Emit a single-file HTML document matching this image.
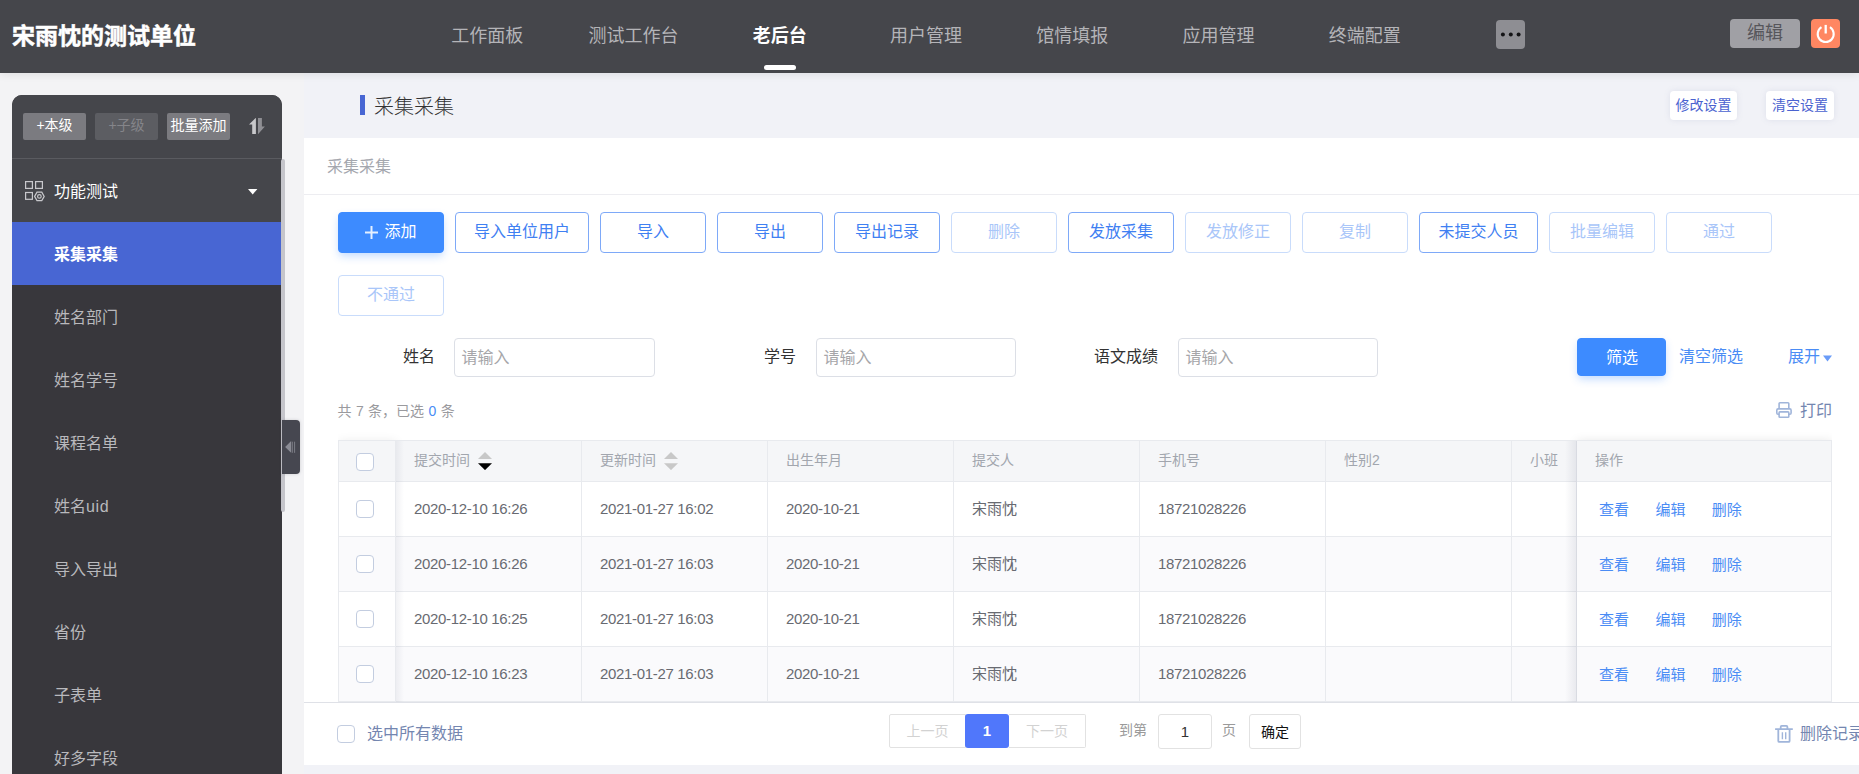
<!DOCTYPE html>
<html lang="zh-CN">
<head>
<meta charset="utf-8">
<title>采集采集</title>
<style>
*{box-sizing:border-box;margin:0;padding:0}
html,body{width:1859px;height:774px;overflow:hidden}
body{background:#f3f3f5;font-family:"Liberation Sans","Noto Sans CJK SC",sans-serif;font-size:14px;color:#333;position:relative}
.abs{position:absolute}
/* header */
#hd{z-index:5;position:absolute;left:0;top:0;width:1859px;height:73px;background:#45464b;box-shadow:0 2px 8px rgba(0,0,0,.08)}
#logo{position:absolute;left:12px;top:0;height:72px;line-height:72px;font-size:23px;font-weight:700;color:#fff;white-space:nowrap;-webkit-text-stroke:.5px #fff}
#nav{position:absolute;left:414px;top:0;width:1024px;height:73px;display:flex}
#nav div{flex:1;text-align:center;line-height:72px;font-size:18px;color:#b4b4b8;position:relative;white-space:nowrap}
#nav div.on{color:#fff;font-weight:700}
#nav div.on:after{content:"";position:absolute;left:50%;margin-left:-16px;top:65px;width:32px;height:5px;border-radius:2.5px;background:#fff}
#more{position:absolute;left:1496px;top:20px;width:29px;height:29px;border-radius:4px;background:#8e8e93}
#more i{position:absolute;top:12.5px;width:4px;height:4px;border-radius:50%;background:#111}
#edit{position:absolute;left:1730px;top:19px;width:70px;height:29px;border-radius:4px;background:#a0a0a5;color:#56565b;font-size:18px;line-height:29px;text-align:center}
#pwr{position:absolute;left:1811px;top:19px;width:29px;height:29px;border-radius:4px;background:#ff8762}
/* sidebar */
#sb{position:absolute;left:12px;top:95px;width:270px;height:700px;background:#38373c;border-radius:10px 10px 0 0;overflow:hidden}
#sbtop{position:absolute;left:0;top:0;width:270px;height:127px;background:#45464b}
#sbtop .ln{position:absolute;left:0;top:63px;width:270px;height:1px;background:#5a5b60}
.sbtn{position:absolute;top:18px;width:63px;height:27px;border-radius:2px;font-size:14px;line-height:25.5px;text-align:center;color:#fff;background:#7b7b80;white-space:nowrap}
.sbtn.dis{background:#5c5d62;color:#85858a}
#grp{position:absolute;left:42px;top:87px;font-size:16px;line-height:20px;color:#fff}
.mi{position:absolute;left:0;width:270px;height:63px;line-height:66px;padding-left:42px;font-size:16px;color:#b9b9bd;white-space:nowrap}
.mi.on{background:#4866d3;color:#fff;font-weight:700}
#thumb{position:absolute;left:281px;top:159px;width:4px;height:353px;background:#c5c5cb;border-radius:2px}
#hand{position:absolute;left:282px;top:420px;width:18px;height:54px;background:#464750;border-radius:0 4px 4px 0;box-shadow:0 0 3px rgba(80,80,100,.25)}
/* main */
#ptitle{position:absolute;left:360px;top:95px;height:20px;border-left:5px solid #4866d3;padding-left:9px;font-size:20px;line-height:24px;color:#333;font-weight:300;white-space:nowrap}
.wbtn{position:absolute;top:91px;height:29px;border-radius:4px;background:#fff;color:#4a62d0;font-size:14px;line-height:29px;text-align:center;box-shadow:0 0 6px rgba(120,130,170,.15)}
#card{position:absolute;left:304px;top:138px;width:1600px;height:627px;background:#fff}
#ctitle{position:absolute;left:23px;top:0;height:56px;line-height:58px;font-size:16px;color:#a4a7ae}
#cline{position:absolute;left:0;top:56px;width:1600px;height:1px;background:#ededf1}
.btn{position:absolute;height:41px;border:1px solid #7ea9f8;border-radius:4px;background:#fff;color:#3f80f2;font-size:16px;line-height:38.5px;text-align:center;white-space:nowrap}
.btn.dis{border-color:#c9dcfb;color:#a9c6f9}
.btn.pri{background:#3d8bff;border-color:#3d8bff;color:#fff;box-shadow:0 4px 8px -1px rgba(61,139,255,.32)}
.lab{position:absolute;top:200px;height:38px;line-height:38px;font-size:16px;color:#333;text-align:right;white-space:nowrap}
.inp{position:absolute;top:200px;width:201px;height:39px;border:1px solid #dcdfe6;border-radius:4px;padding-left:6.5px;line-height:38px;font-size:16px;color:#a6a6a9}
.lnk{position:absolute;top:200px;height:38px;line-height:38px;font-size:16px;color:#4a8cf5;white-space:nowrap}
/* table */
#tb{background:#fff;position:absolute;left:34px;top:302px;width:1494px;height:262px;border-left:1px solid #e8eaee;border-top:1px solid #e8eaee;overflow:hidden}
.row{position:absolute;left:0;width:1493px;border-bottom:1px solid #e8eaee}
.row.h{top:0;height:41px;background:#f5f6f8;color:#a2a6ae}
.row.b{height:55px;color:#686a71;background:#fff}
.row.b.s{background:#fafafc}
.c{position:absolute;top:0;height:100%;border-right:1px solid #e8eaee;padding-left:18px;white-space:nowrap;font-size:14px}
.row.h .c{line-height:39.5px}
.row.b .c{line-height:54px;font-size:15px}
.row.b .n{letter-spacing:-.33px}
.ck{position:absolute;width:18px;height:18px;border:1px solid #c3cde0;border-radius:4px;background:#fff}
.op a{color:#4a8cf5;font-size:15px;position:relative;top:.5px;margin-right:26.4px;text-decoration:none}
/* footer */
#ft{position:absolute;left:0;top:564px;width:1600px;height:63px;background:#fff;border-top:1px solid #dfe1e7}
</style>
</head>
<body>
<div id="hd">
  <div id="logo">宋雨忱的测试单位</div>
  <div id="nav"><div>工作面板</div><div>测试工作台</div><div class="on">老后台</div><div>用户管理</div><div>馆情填报</div><div>应用管理</div><div>终端配置</div></div>
  <div id="more"><svg width="29" height="29" viewBox="0 0 29 29"><circle cx="6.900" cy="14.600" r="2" fill="#141416"/><circle cx="14.800" cy="14.600" r="2" fill="#141416"/><circle cx="22.600" cy="14.600" r="2" fill="#141416"/></svg></div>
  <div id="edit">编辑</div>
  <div id="pwr"><svg width="29" height="29" viewBox="0 0 29 29"><path d="M10.460 8.220A8 8 0 1 0 18.940 8.220" fill="none" stroke="#fff" stroke-width="2.100"/><path d="M14.700 5.900V14.500" stroke="#fff" stroke-width="2.300"/></svg></div>
</div>

<div id="sb">
  <div id="sbtop">
    <div class="sbtn" style="left:11px">+本级</div>
    <div class="sbtn dis" style="left:83px">+子级</div>
    <div class="sbtn" style="left:155px">批量添加</div>
    <svg class="abs" style="left:236px;top:22px" width="18" height="18" viewBox="0 0 18 18"><path d="M7.9 .8L1 7.600h3.200V17h3.700z" fill="#c8c8cb"/><path d="M10 1h3.900v8.600h3L10 17.200z" fill="#8f8f94"/></svg>
    <div class="ln"></div>
    <svg class="abs" style="left:12px;top:85px" width="22" height="22" viewBox="0 0 22 22"><g fill="none" stroke="#c8c8cc" stroke-width="1.200"><rect x="1.600" y="1.600" width="6.800" height="6.800"/><rect x="11.600" y="1.600" width="6.800" height="6.800"/><rect x="1.600" y="12.500" width="6.800" height="6.800"/><path d="M10.600 16.400l2.400-4.200h4.800l2.400 4.200-2.400 4.200h-4.800z"/><circle cx="15.400" cy="16.400" r="1.800"/></g></svg>
    <div id="grp">功能测试</div>
    <svg class="abs" style="left:236px;top:94px" width="10" height="6" viewBox="0 0 10 6"><path d="M0 0h9.4L4.7 5.4z" fill="#fff"/></svg>
  </div>
  <div class="mi on" style="top:127px">采集采集</div>
  <div class="mi" style="top:190px">姓名部门</div>
  <div class="mi" style="top:253px">姓名学号</div>
  <div class="mi" style="top:316px">课程名单</div>
  <div class="mi" style="top:379px">姓名<span style="letter-spacing:.7px">uid</span></div>
  <div class="mi" style="top:442px">导入导出</div>
  <div class="mi" style="top:505px">省份</div>
  <div class="mi" style="top:568px">子表单</div>
  <div class="mi" style="top:631px">好多字段</div>
</div>
<div id="thumb"></div>
<div id="hand"><svg width="18" height="54" viewBox="0 0 18 54"><path d="M3.100 26.900l6-5.800v11.700z" fill="#8a8b94"/><path d="M10.300 21.700v11.100M12.600 21.700v11.100" stroke="#8a8b94" stroke-width=".8"/></svg></div>

<div class="abs" style="left:304px;top:73px;width:1555px;height:701px;background:#f1f2f7"></div>
<div id="ptitle">采集采集</div>
<div class="wbtn" style="left:1670px;width:67px">修改设置</div>
<div class="wbtn" style="left:1766px;width:68px">清空设置</div>

<div id="card">
  <div id="ctitle">采集采集</div>
  <div id="cline"></div>

  <div class="btn pri" style="left:34px;top:74px;width:106px;text-align:left;padding-left:45.5px"><svg class="abs" style="left:26px;top:13px" width="13" height="13" viewBox="0 0 13 13"><path d="M6.500 0v13M0 6.500h13" stroke="#e4efff" stroke-width="2"/></svg>添加</div>
  <div class="btn" style="left:151px;top:74px;width:134px">导入单位用户</div>
  <div class="btn" style="left:296px;top:74px;width:106px">导入</div>
  <div class="btn" style="left:413px;top:74px;width:106px">导出</div>
  <div class="btn" style="left:530px;top:74px;width:106px">导出记录</div>
  <div class="btn dis" style="left:647px;top:74px;width:106px">删除</div>
  <div class="btn" style="left:764px;top:74px;width:106px">发放采集</div>
  <div class="btn dis" style="left:881px;top:74px;width:106px">发放修正</div>
  <div class="btn dis" style="left:998px;top:74px;width:106px">复制</div>
  <div class="btn" style="left:1115px;top:74px;width:119px">未提交人员</div>
  <div class="btn dis" style="left:1245px;top:74px;width:106px">批量编辑</div>
  <div class="btn dis" style="left:1362px;top:74px;width:106px">通过</div>
  <div class="btn dis" style="left:34px;top:137px;width:106px">不通过</div>

  <div class="lab" style="left:50px;width:81px">姓名</div>
  <div class="inp" style="left:150px">请输入</div>
  <div class="lab" style="left:400px;width:92px">学号</div>
  <div class="inp" style="left:512px;width:200px">请输入</div>
  <div class="lab" style="left:760px;width:94px">语文成绩</div>
  <div class="inp" style="left:874px;width:200px">请输入</div>
  <div class="btn pri" style="left:1273px;top:200px;width:89px;height:38px;line-height:37.5px;padding-left:1px">筛选</div>
  <div class="lnk" style="left:1375px">清空筛选</div>
  <div class="lnk" style="left:1484px">展开</div>
  <svg class="abs" style="left:1519px;top:216.500px" width="9" height="7" viewBox="0 0 9 7"><path d="M0 .5h9L4.500 6.500z" fill="#6a9cf8"/></svg>

  <div class="abs" style="left:33.5px;top:263px;font-size:14px;line-height:20px;color:#9a9a9e;white-space:nowrap;word-spacing:.5px">共 7 条，已选 <span style="color:#4a8cf5">0</span> 条</div>
  <svg class="abs" style="left:1472px;top:264px" width="16" height="16" viewBox="0 0 16 16"><g fill="none" stroke="#a0b5da" stroke-width="1.600"><rect x="3.100" y=".8" width="9.700" height="6" rx=".8"/><rect x=".8" y="6.900" width="14.300" height="5.300" rx="1.300" fill="#fff"/><rect x="3.100" y="9.900" width="9.700" height="5.300" rx=".8" fill="#fff"/></g></svg>
  <div class="abs" style="left:1496px;top:260.5px;font-size:16px;line-height:24px;color:#7486b0;white-space:nowrap">打印</div>

  <div class="abs" style="left:1240px;top:288px;width:288px;height:276px;overflow:hidden"><div class="abs" style="left:33px;top:15px;width:255px;height:261px;background:#fff;box-shadow:0 0 10px rgba(0,0,0,.10)"></div></div>
  <div class="abs" style="left:34px;top:288px;width:100px;height:276px;overflow:hidden"><div class="abs" style="left:1px;top:15px;width:57px;height:261px;background:#fff;box-shadow:0 0 10px rgba(0,0,0,.08)"></div></div>
  <div id="tb">
    <div class="row h">
      <div class="c" style="left:0;width:57px"><span class="ck" style="left:17px;top:12px"></span></div>
      <div class="c" style="left:57px;width:186px">提交时间<svg class="abs" style="left:82px;top:11px" width="14" height="18" viewBox="0 0 14 18"><path d="M7 0l7 7H0z" fill="#c8c8c8"/><path d="M0 11.200h14l-7 6.900z" fill="#000"/></svg></div>
      <div class="c" style="left:243px;width:186px">更新时间<svg class="abs" style="left:82px;top:11px" width="14" height="18" viewBox="0 0 14 18"><path d="M7 0l7 7H0z" fill="#c8c8c8"/><path d="M0 11.200h14l-7 6.900z" fill="#c8c8c8"/></svg></div>
      <div class="c" style="left:429px;width:186px">出生年月</div>
      <div class="c" style="left:615px;width:186px">提交人</div>
      <div class="c" style="left:801px;width:186px">手机号</div>
      <div class="c" style="left:987px;width:186px">性别2</div>
      <div class="c" style="left:1173px;width:65px">小班</div>
      <div class="c" style="left:1238px;width:255px">操作</div>
    </div>
    <div class="row b" style="top:41px">
      <div class="c" style="left:0;width:57px"><span class="ck" style="left:17px;top:18px"></span></div>
      <div class="c n" style="left:57px;width:186px">2020-12-10 16:26</div>
      <div class="c n" style="left:243px;width:186px">2021-01-27 16:02</div>
      <div class="c n" style="left:429px;width:186px">2020-10-21</div>
      <div class="c" style="left:615px;width:186px">宋雨忱</div>
      <div class="c n" style="left:801px;width:186px">18721028226</div>
      <div class="c" style="left:987px;width:186px"></div>
      <div class="c" style="left:1173px;width:65px"></div>
      <div class="c op" style="left:1238px;width:255px;padding-left:22px"><a>查看</a><a>编辑</a><a>删除</a></div>
    </div>
    <div class="row b s" style="top:96px">
      <div class="c" style="left:0;width:57px"><span class="ck" style="left:17px;top:18px"></span></div>
      <div class="c n" style="left:57px;width:186px">2020-12-10 16:26</div>
      <div class="c n" style="left:243px;width:186px">2021-01-27 16:03</div>
      <div class="c n" style="left:429px;width:186px">2020-10-21</div>
      <div class="c" style="left:615px;width:186px">宋雨忱</div>
      <div class="c n" style="left:801px;width:186px">18721028226</div>
      <div class="c" style="left:987px;width:186px"></div>
      <div class="c" style="left:1173px;width:65px"></div>
      <div class="c op" style="left:1238px;width:255px;padding-left:22px"><a>查看</a><a>编辑</a><a>删除</a></div>
    </div>
    <div class="row b" style="top:151px">
      <div class="c" style="left:0;width:57px"><span class="ck" style="left:17px;top:18px"></span></div>
      <div class="c n" style="left:57px;width:186px">2020-12-10 16:25</div>
      <div class="c n" style="left:243px;width:186px">2021-01-27 16:03</div>
      <div class="c n" style="left:429px;width:186px">2020-10-21</div>
      <div class="c" style="left:615px;width:186px">宋雨忱</div>
      <div class="c n" style="left:801px;width:186px">18721028226</div>
      <div class="c" style="left:987px;width:186px"></div>
      <div class="c" style="left:1173px;width:65px"></div>
      <div class="c op" style="left:1238px;width:255px;padding-left:22px"><a>查看</a><a>编辑</a><a>删除</a></div>
    </div>
    <div class="row b s" style="top:206px">
      <div class="c" style="left:0;width:57px"><span class="ck" style="left:17px;top:18px"></span></div>
      <div class="c n" style="left:57px;width:186px">2020-12-10 16:23</div>
      <div class="c n" style="left:243px;width:186px">2021-01-27 16:03</div>
      <div class="c n" style="left:429px;width:186px">2020-10-21</div>
      <div class="c" style="left:615px;width:186px">宋雨忱</div>
      <div class="c n" style="left:801px;width:186px">18721028226</div>
      <div class="c" style="left:987px;width:186px"></div>
      <div class="c" style="left:1173px;width:65px"></div>
      <div class="c op" style="left:1238px;width:255px;padding-left:22px"><a>查看</a><a>编辑</a><a>删除</a></div>
    </div>
    <div class="abs" style="left:57px;top:0;width:8px;height:262px;background:linear-gradient(90deg,rgba(120,125,150,.10),rgba(120,125,150,0))"></div>
    <div class="abs" style="left:1226px;top:0;width:12px;height:262px;background:linear-gradient(270deg,rgba(120,125,150,.14),rgba(120,125,150,0))"></div>
  </div>

  <div id="ft">
    <span class="ck" style="left:33px;top:22px"></span>
    <div class="abs" style="left:63px;top:19px;font-size:16px;line-height:24px;color:#7486b0;white-space:nowrap">选中所有数据</div>
    <div class="abs" style="left:585px;top:11px;width:77px;height:34px;border:1px solid #e2e2e2;border-radius:2px 0 0 2px;font-size:14px;line-height:32px;text-align:center;color:#d2d2d2">上一页</div>
    <div class="abs" style="left:661px;top:11px;width:44px;height:34px;background:#5077fb;border-radius:3px;font-size:15px;font-weight:700;line-height:34px;text-align:center;color:#fff">1</div>
    <div class="abs" style="left:705px;top:11px;width:77px;height:34px;border:1px solid #e2e2e2;border-left:0;border-radius:0 2px 2px 0;font-size:14px;line-height:32px;text-align:center;color:#d2d2d2">下一页</div>
    <div class="abs" style="left:815px;top:17px;font-size:14px;line-height:20px;color:#9a9a9a">到第</div>
    <div class="abs" style="left:854px;top:11px;width:54px;height:35px;border:1px solid #e2e2e2;border-radius:3px;font-size:15px;line-height:34px;text-align:center;color:#333">1</div>
    <div class="abs" style="left:918px;top:17px;font-size:14px;line-height:20px;color:#9a9a9a">页</div>
    <div class="abs" style="left:945px;top:11px;width:52px;height:35px;border:1px solid #e2e2e2;border-radius:3px;font-size:14px;line-height:34px;text-align:center;color:#111">确定</div>
    <svg class="abs" style="left:1471px;top:22px" width="18" height="18" viewBox="0 0 18 18"><g fill="none" stroke="#a0b5da"><path stroke-width="1.800" d="M.1 4.100h17.700M5.700 4V1.900a1 1 0 0 1 1-1h4.700a1 1 0 0 1 1 1V4M3.300 5v10.900a1 1 0 0 0 1 1h9.300a1 1 0 0 0 1-1V5"/><path stroke-width="1.400" d="M7.400 7.200v7.100M10.700 7.200v7.100"/></g></svg>
    <div class="abs" style="left:1496px;top:19px;font-size:16px;line-height:24px;color:#7486b0;white-space:nowrap">删除记录</div>
  </div>
</div>
</body>
</html>
